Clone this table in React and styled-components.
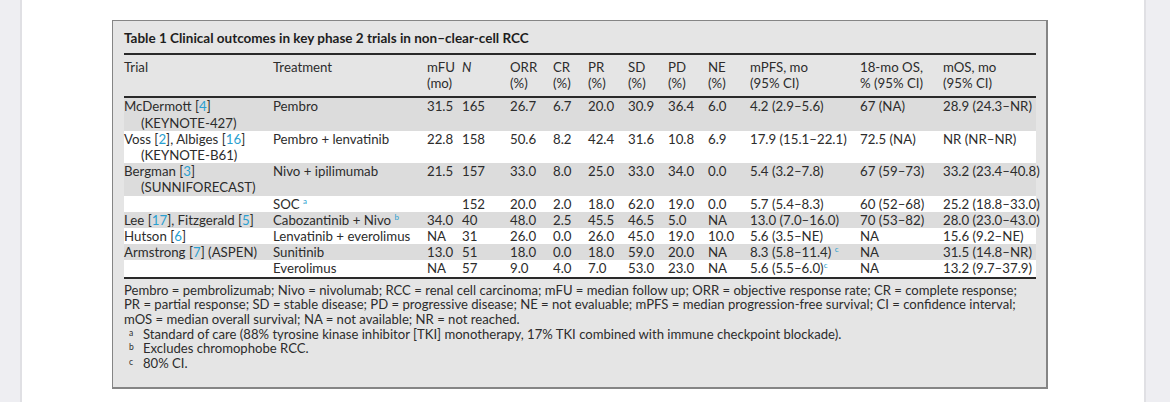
import React from "react";
import styled, { createGlobalStyle } from "styled-components";

const GlobalStyle = createGlobalStyle`
  html, body {
    margin: 0;
    padding: 0;
    background: #ffffff;
  }
`;

const columns = [149, 154, 35, 48, 43, 35, 40, 40, 40, 42, 110, 83, 93];

const headers = [
  ["Trial", ""],
  ["Treatment", ""],
  ["mFU", "(mo)"],
  ["N", ""],
  ["ORR", "(%)"],
  ["CR", "(%)"],
  ["PR", "(%)"],
  ["SD", "(%)"],
  ["PD", "(%)"],
  ["NE", "(%)"],
  ["mPFS, mo", "(95% CI)"],
  ["18-mo OS,", "% (95% CI)"],
  ["mOS, mo", "(95% CI)"],
];

const legend = [
  "Pembro = pembrolizumab; Nivo = nivolumab; RCC = renal cell carcinoma; mFU = median follow up; ORR = objective response rate; CR = complete response;",
  "PR = partial response; SD = stable disease; PD = progressive disease; NE = not evaluable; mPFS = median progression-free survival; CI = confidence interval;",
  "mOS = median overall survival; NA = not available; NR = not reached.",
];

const notes = [
  ["a", "Standard of care (88% tyrosine kinase inhibitor [TKI] monotherapy, 17% TKI combined with immune checkpoint blockade)."],
  ["b", "Excludes chromophobe RCC."],
  ["c", "80% CI."],
];

function Ref({ n }) {
  return (
    <>
      [<RefNum>{n}</RefNum>]
    </>
  );
}

function getRows() {
  return [
    {
      shade: true,
      trial: <>McDermott <Ref n="4" /><br />(KEYNOTE-427)</>,
      treatment: "Pembro",
      values: ["31.5", "165", "26.7", "6.7", "20.0", "30.9", "36.4", "6.0", "4.2 (2.9–5.6)", "67 (NA)", "28.9 (24.3–NR)"],
    },
    {
      shade: false,
      trial: <>Voss <Ref n="2" />, Albiges <Ref n="16" /><br />(KEYNOTE-B61)</>,
      treatment: "Pembro + lenvatinib",
      values: ["22.8", "158", "50.6", "8.2", "42.4", "31.6", "10.8", "6.9", "17.9 (15.1–22.1)", "72.5 (NA)", "NR (NR–NR)"],
    },
    {
      shade: true,
      trial: <>Bergman <Ref n="3" /><br />(SUNNIFORECAST)</>,
      treatment: "Nivo + ipilimumab",
      values: ["21.5", "157", "33.0", "8.0", "25.0", "33.0", "34.0", "0.0", "5.4 (3.2–7.8)", "67 (59–73)", "33.2 (23.4–40.8)"],
    },
    {
      shade: false,
      trial: "",
      treatment: <>SOC <Sup>a</Sup></>,
      values: ["", "152", "20.0", "2.0", "18.0", "62.0", "19.0", "0.0", "5.7 (5.4–8.3)", "60 (52–68)", "25.2 (18.8–33.0)"],
    },
    {
      shade: true,
      trial: <>Lee <Ref n="17" />, Fitzgerald <Ref n="5" /></>,
      treatment: <>Cabozantinib + Nivo <Sup>b</Sup></>,
      values: ["34.0", "40", "48.0", "2.5", "45.5", "46.5", "5.0", "NA", "13.0 (7.0–16.0)", "70 (53–82)", "28.0 (23.0–43.0)"],
    },
    {
      shade: false,
      trial: <>Hutson <Ref n="6" /></>,
      treatment: "Lenvatinib + everolimus",
      values: ["NA", "31", "26.0", "0.0", "26.0", "45.0", "19.0", "10.0", "5.6 (3.5–NE)", "NA", "15.6 (9.2–NE)"],
    },
    {
      shade: true,
      trial: <>Armstrong <Ref n="7" /> (ASPEN)</>,
      treatment: "Sunitinib",
      values: ["13.0", "51", "18.0", "0.0", "18.0", "59.0", "20.0", "NA", <>8.3 (5.8–11.4) <Sup>c</Sup></>, "NA", "31.5 (14.8–NR)"],
    },
    {
      shade: false,
      trial: "",
      treatment: "Everolimus",
      values: ["NA", "57", "9.0", "4.0", "7.0", "53.0", "23.0", "NA", <>5.6 (5.5–6.0)<Sup>c</Sup></>, "NA", "13.2 (9.7–37.9)"],
    },
  ];
}

export default function App() {
  const rows = getRows();
  return (
    <>
      <GlobalStyle />
      <Page>
        <Gutter $side="left" />
        <Sheet>
          <TableBox>
            <Caption>Table 1 Clinical outcomes in key phase 2 trials in non–clear-cell RCC</Caption>
            <DataTable>
              <colgroup>
                {columns.map((w, i) => (
                  <col key={i} style={{ width: w }} />
                ))}
              </colgroup>
              <thead>
                <tr>
                  {headers.map((h, i) => (
                    <HeadCell key={i} $italic={h[0] === "N"}>
                      <span>{h[0]}</span>
                      <br />
                      {h[1] || "\u00a0"}
                    </HeadCell>
                  ))}
                </tr>
              </thead>
              <tbody>
                {rows.map((r, i) => (
                  <Row key={i} $shade={r.shade}>
                    <TrialCell>{r.trial}</TrialCell>
                    <Cell>{r.treatment}</Cell>
                    {r.values.map((v, j) => (
                      <Cell key={j}>{v}</Cell>
                    ))}
                  </Row>
                ))}
              </tbody>
            </DataTable>
            <Footnotes>
              {legend.map((line) => (
                <Legend key={line}>{line}</Legend>
              ))}
              {notes.map(([mark, text]) => (
                <Note key={mark}>
                  <NoteMark>{mark}</NoteMark>
                  <span>{text}</span>
                </Note>
              ))}
            </Footnotes>
          </TableBox>
        </Sheet>
        <Gutter $side="right" />
      </Page>
    </>
  );
}

const Page = styled.div`
  display: grid;
  grid-template-columns: 22px 1fr 26px;
  height: 402px;
  overflow: hidden;
  font-family: Lato, "Open Sans", sans-serif;
  color: #2c2c2c;
`;

const Gutter = styled.div`
  background: #eeeef2;
  ${(p) =>
    p.$side === "left"
      ? "border-right: 2px solid #e0e0e4;"
      : "border-left: 2px solid #e0e0e4;"}
`;

const Sheet = styled.div`
  padding: 20px 0 0 90px;
  background: #ffffff;
`;

const TableBox = styled.div`
  width: 912px;
  background: #e5e5e5;
  border: 1px solid #858585;
  border-right-width: 2px;
  border-bottom-width: 2px;
  padding: 0 10px 16px 11px;
`;

const Caption = styled.div`
  font-weight: 700;
  font-size: 13.5px;
  line-height: 16px;
  padding: 9px 0 7px;
  color: #1e1e1e;
  white-space: nowrap;
`;

const DataTable = styled.table`
  width: 912px;
  table-layout: fixed;
  border-collapse: collapse;
  font-size: 13.25px;
  line-height: 16.2px;
  border-top: 2px solid #2a2a2a;
  border-bottom: 2px solid #2a2a2a;
`;

const HeadCell = styled.th`
  text-align: left;
  font-weight: 400;
  padding: 4px 0 5px;
  vertical-align: top;
  white-space: nowrap;
  border-bottom: 2px solid #2a2a2a;
  span {
    font-style: ${(p) => (p.$italic ? "italic" : "normal")};
  }
`;

const Row = styled.tr`
  background: ${(p) => (p.$shade ? "#dcdcdc" : "#ffffff")};
`;

const Cell = styled.td`
  padding: 0;
  vertical-align: top;
  white-space: nowrap;
`;

const TrialCell = styled(Cell)`
  padding-left: 17px;
  text-indent: -17px;
`;

const RefNum = styled.span`
  color: #2a9fd0;
`;

const Sup = styled.sup`
  color: #2a9fd0;
  font-size: 8px;
  line-height: 0;
`;

const Footnotes = styled.div`
  font-size: 13.1px;
  line-height: 14.7px;
  padding-top: 4px;
`;

const Legend = styled.p`
  margin: 0;
  white-space: nowrap;
`;

const Note = styled.div`
  display: flex;
  gap: 8px;
  padding-left: 5px;
  white-space: nowrap;
`;

const NoteMark = styled.sup`
  font-size: 8.5px;
  line-height: 12px;
  width: 6px;
`;
